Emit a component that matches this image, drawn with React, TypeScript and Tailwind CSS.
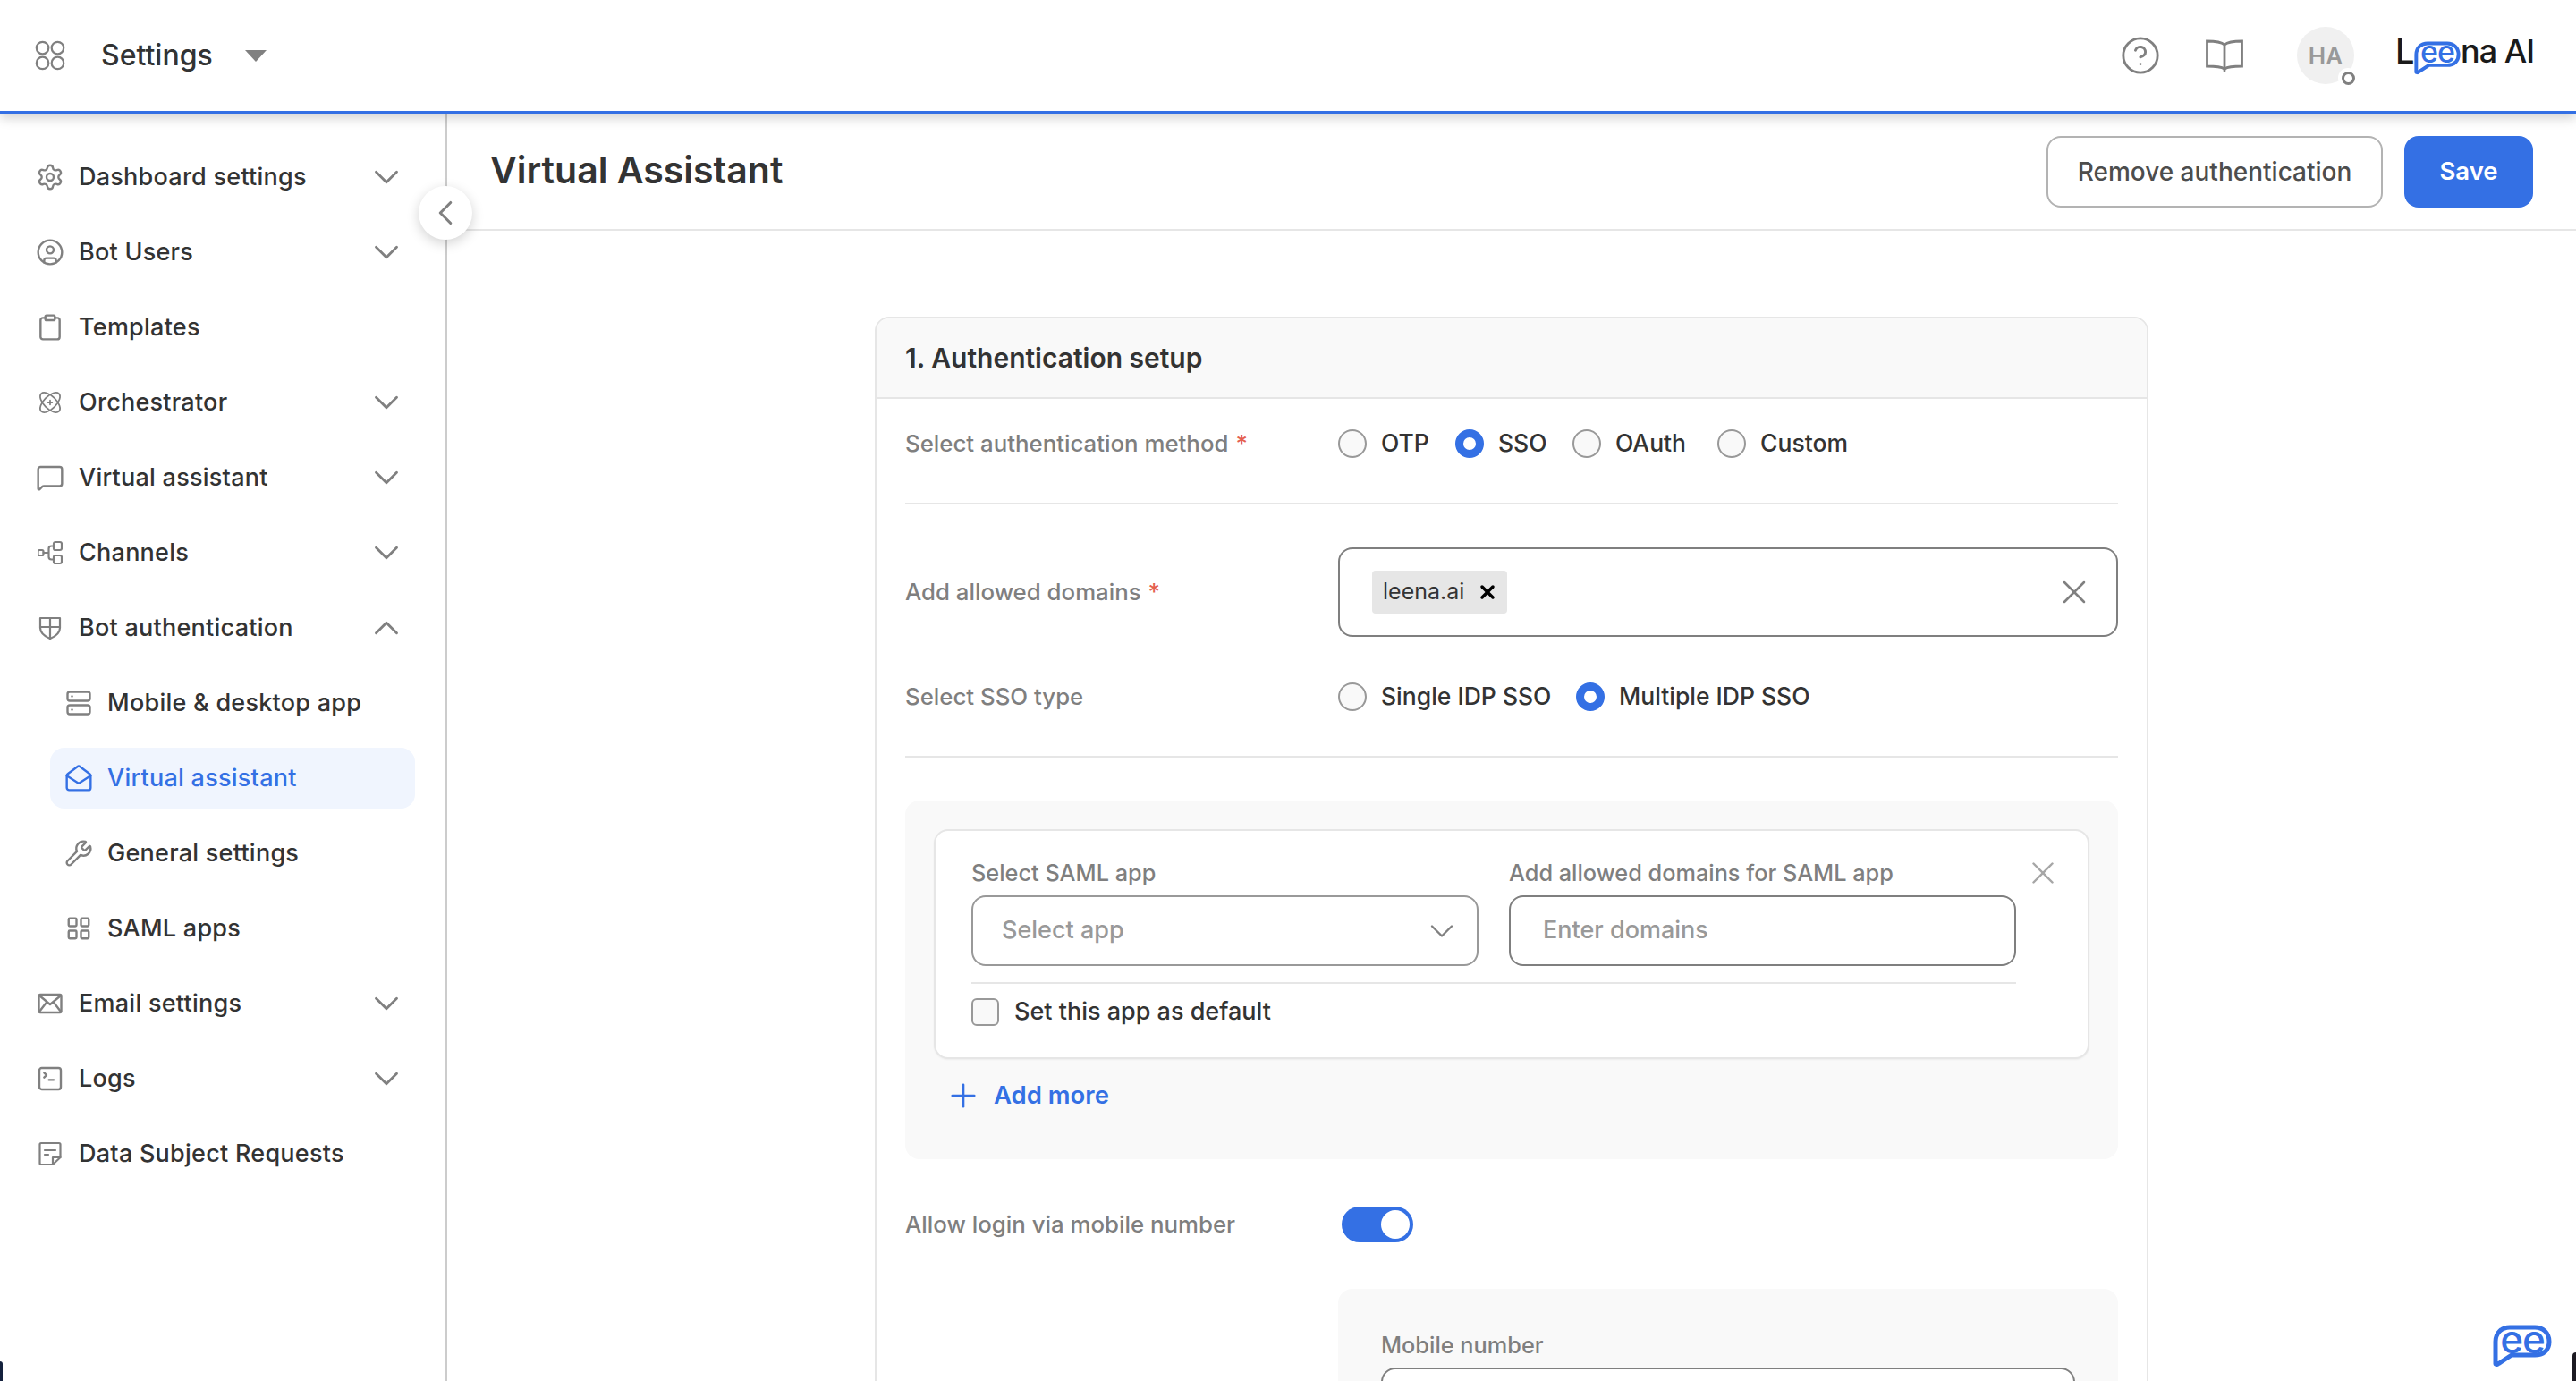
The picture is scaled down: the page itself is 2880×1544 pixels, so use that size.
import { ChevronDown, ChevronLeft, ChevronUp, CircleHelp, CircleUser, Clipboard, LayoutGrid, MailOpen, MessageSquare, Plus, Server, Settings, SquareTerminal, Wrench, X } from "lucide-react";
import type { ReactNode } from "react";

const stroke = { fill: "none", stroke: "currentColor", strokeWidth: 2, strokeLinecap: "round", strokeLinejoin: "round" } as const;

function AtomIcon() {
    return (
        <svg viewBox="0 0 24 24" className="w-[28px] h-[28px]" {...stroke} strokeWidth={1.5}>
            <ellipse cx="12" cy="12" rx="12" ry="6" transform="rotate(45 12 12)" />
            <ellipse cx="12" cy="12" rx="12" ry="6" transform="rotate(-45 12 12)" />
            <path d="M12 10v4M10 12h4" />
        </svg>
    );
}

function ChannelsIcon() {
    return (
        <svg viewBox="0 0 28 28" className="w-[28px] h-[28px]" {...stroke} strokeWidth={2.2}>
            <rect x="0.5" y="11" width="6" height="6" rx="1.5" />
            <rect x="18" y="2" width="9" height="9" rx="2" />
            <rect x="18" y="17" width="9" height="9" rx="2" />
            <path d="M6.5 14H12.5M18 6.5h-2.5a3 3 0 0 0-3 3v9a3 3 0 0 0 3 3H18" />
        </svg>
    );
}

function ShieldIcon() {
    return (
        <svg viewBox="0 0 28 28" className="w-[28px] h-[28px]" {...stroke} strokeWidth={2.2}>
            <path d="M3 3h22v11c0 6-5 9.500-11 12-6-2.500-11-6-11-12z" />
            <path d="M14 3v23M3 13h22" />
        </svg>
    );
}

function EmailIcon() {
    return (
        <svg viewBox="0 0 28 28" className="w-[28px] h-[28px]" {...stroke} strokeWidth={2.400}>
            <rect x="1.500" y="4" width="25" height="20" rx="1.500" />
            <path d="M2 5l12 10L26 5M2 23l8.500-11M26 23l-8.500-11" />
        </svg>
    );
}

function NoteIcon() {
    return (
        <svg viewBox="0 0 28 28" className="w-[28px] h-[28px]" {...stroke} strokeWidth={2.200}>
            <path d="M17 26H4a1.500 1.500 0 0 1-1.500-1.500v-21A1.500 1.500 0 0 1 4 2h20a1.500 1.500 0 0 1 1.500 1.500V18z" />
            <path d="M17 26v-8h8.500M8 10h12M8 15h4" />
        </svg>
    );
}

function AppsIcon() {
    return (
        <svg viewBox="0 0 32 32" className="w-[36px] h-[36px]" {...stroke}>
            <circle cx="8.500" cy="8.500" r="6" />
            <circle cx="23.500" cy="8.500" r="6" />
            <circle cx="8.500" cy="23.500" r="6" />
            <circle cx="23.500" cy="23.500" r="6" />
        </svg>
    );
}

function BookIcon() {
    return (
        <svg viewBox="0 0 42 36" className="w-[42px] h-[36px] text-[#808080]" {...stroke} strokeWidth={2.800}>
            <path d="M21 6C17 2.500 10 2 1.500 2v28c8 0 15 0 19.500 3 4.500-3 11.500-3 19.500-3V2C32 2 25 2.500 21 6z" strokeLinejoin="miter" />
            <path d="M21 6v29" />
        </svg>
    );
}

// speech bubble of the logo and the launcher, the two e's stay real text on top
function BubbleShape({ className, strokeWidth = 5 }: { className: string; strokeWidth?: number }) {
    return (
        <svg viewBox="0 0 66 48" className={className}>
            <path
                d="M3 44V19C3 9 10 3 19 3h28c9 0 16 6 16 16s-7 15-16 15H21L5 44.500z"
                fill="#fff"
                stroke="#3470e4"
                strokeWidth={strokeWidth}
                strokeLinejoin="round"
            />
        </svg>
    );
}

interface NavItem {
    label: string;
    icon: ReactNode;
    chevron?: "down" | "up";
    sub?: boolean;
    active?: boolean;
}

const navIconClass = "w-[32px] h-[32px]";

const navItems: NavItem[] = [
    { label: "Dashboard settings", icon: <Settings className={navIconClass} strokeWidth={1.8} />, chevron: "down" },
    { label: "Bot Users", icon: <CircleUser className={navIconClass} strokeWidth={1.8} />, chevron: "down" },
    { label: "Templates", icon: <Clipboard className={navIconClass} strokeWidth={1.8} /> },
    { label: "Orchestrator", icon: <AtomIcon />, chevron: "down" },
    { label: "Virtual assistant", icon: <MessageSquare className={navIconClass} strokeWidth={1.8} />, chevron: "down" },
    { label: "Channels", icon: <ChannelsIcon />, chevron: "down" },
    { label: "Bot authentication", icon: <ShieldIcon />, chevron: "up" },
    { label: "Mobile & desktop app", icon: <Server className="w-[30px] h-[30px]" strokeWidth={1.9} />, sub: true },
    { label: "Virtual assistant", icon: <MailOpen className={navIconClass} strokeWidth={1.8} />, sub: true, active: true },
    { label: "General settings", icon: <Wrench className={navIconClass} strokeWidth={1.8} />, sub: true },
    { label: "SAML apps", icon: <LayoutGrid className="w-[30px] h-[30px]" strokeWidth={1.9} />, sub: true },
    { label: "Email settings", icon: <EmailIcon />, chevron: "down" },
    { label: "Logs", icon: <SquareTerminal className={navIconClass} strokeWidth={1.8} />, chevron: "down" },
    { label: "Data Subject Requests", icon: <NoteIcon /> },
];

function SideItem({ item }: { item: NavItem }) {
    return (
        <div className="h-[84px] flex items-center pl-[40px] pr-[50px]">
            <div
                className={`flex items-center flex-1 h-[68px] rounded-[16px] ${item.sub ? "-ml-[16px] pl-[16px] -mr-[16px]" : ""} ${item.active ? "bg-[#f0f5fe] text-[#3470e4]" : ""}`}
            >
                <span className={`flex items-center justify-center w-[32px] shrink-0 ${item.active ? "text-[#3470e4]" : "text-[#808080]"}`}>
                    {item.icon}
                </span>
                <span className={`ml-[16px] text-[27px] tracking-[0.25px] font-medium whitespace-nowrap ${item.active ? "text-[#3470e4]" : "text-[#333333]"}`}>
                    {item.label}
                </span>
                {item.chevron === "down" && <ChevronDown className="ml-auto -mr-[7px] w-[46px] h-[46px] text-[#808080]" strokeWidth={1.5} />}
                {item.chevron === "up" && <ChevronUp className="ml-auto -mr-[7px] w-[46px] h-[46px] text-[#808080]" strokeWidth={1.5} />}
            </div>
        </div>
    );
}

function Radio({ label, checked, width }: { label: string; checked?: boolean; width: string }) {
    return (
        <div className={`flex items-center gap-[16px] ${width}`}>
            {checked ? (
                <span className="w-[32px] h-[32px] rounded-full bg-white border-[9px] border-[#3470e4] shrink-0" />
            ) : (
                <span className="w-[32px] h-[32px] rounded-full bg-[#f9f9f9] border-2 border-[#999999] shrink-0" />
            )}
            <span className="text-[26.5px] font-medium text-[#333333] whitespace-nowrap">{label}</span>
        </div>
    );
}

function FieldLabel({ children, required }: { children: string; required?: boolean }) {
    return (
        <div className="w-[484px] shrink-0 text-[25.800px] font-medium text-[#7f7f7f] whitespace-nowrap">
            {children}
            {required && <span className="text-[#e5604d] ml-[8px]">*</span>}
        </div>
    );
}

export default function App() {
    return (
        <div className="relative w-[2880px] h-[1544px] overflow-hidden bg-white flex flex-col [font-family:Inter,sans-serif]">
            {/* Top bar */}
            <header className="relative z-10 h-[128px] shrink-0 bg-white border-b-4 border-[#3470e4] shadow-[0_4px_12px_rgba(0,0,0,0.18)] flex items-center pl-[38px] pr-[48px]">
                <span className="text-[#808080]">
                    <AppsIcon />
                </span>
                <span className="ml-[39px] text-[32px] font-medium text-[#333333]">Settings</span>
                <span className="ml-[36px] w-0 h-0 border-l-[12px] border-r-[12px] border-t-[13px] border-l-transparent border-r-transparent border-t-[#808080]" />
                <div className="ml-auto flex items-center">
                    <CircleHelp className="w-[46px] h-[46px] text-[#808080]" strokeWidth={1.500} />
                    <span className="ml-[50px]">
                        <BookIcon />
                    </span>
                    <div className="relative ml-[60px] w-[64px] h-[64px] rounded-full bg-[#f0f0f0] flex items-center justify-center text-[26px] font-semibold text-[#999999]">
                        HA
                        <span className="absolute right-[-4px] bottom-[-4px] w-[22px] h-[22px] rounded-full bg-white flex items-center justify-center">
                            <span className="w-[15px] h-[15px] rounded-full border-[3px] border-[#808080]" />
                        </span>
                    </div>
                    <div className="relative ml-[48px] w-[152px] h-[64px]">
                        <span className="absolute left-[-2px] top-[3px] text-[38px] leading-[48px] font-medium text-[#1a1a1a]">L</span>
                        <span className="absolute left-[71px] top-[3px] text-[36px] leading-[48px] font-medium text-[#1a1a1a] tracking-[-1px] whitespace-nowrap">na AI</span>
                        <div className="absolute left-[19px] top-[16px] w-[52px] h-[38px]">
                            <BubbleShape className="w-[52px] h-[38px]" />
                            <span className="absolute left-0 right-0 top-[-5px] text-center text-[34px] leading-[34px] font-medium tracking-[-1px] text-[#3470e4]">ee</span>
                        </div>
                    </div>
                </div>
            </header>

            <div className="relative flex flex-1 min-h-0">
                {/* Sidebar */}
                <aside className="w-[500px] shrink-0 border-r-2 border-[#cccccc] pt-[28px]">
                    {navItems.map((item, i) => (
                        <div key={i} className={item.sub ? "pl-[32px]" : ""}>
                            <SideItem item={item} />
                        </div>
                    ))}
                </aside>

                {/* Collapse button, sits over the sidebar edge */}
                <button className="absolute left-[468px] top-[80px] z-10 w-[60px] h-[60px] rounded-full bg-white shadow-[0_4px_14px_rgba(0,0,0,0.18)] flex items-center justify-center text-[#808080]">
                    <ChevronLeft className="w-[46px] h-[46px]" strokeWidth={1.6} />
                </button>

                <main className="flex-1 min-w-0 flex flex-col">
                    <div className="h-[130px] shrink-0 border-b-2 border-[#e6e6e6] flex items-center pl-[48px] pr-[48px]">
                        <h1 className="text-[41px] font-semibold text-[#333333] mb-[2px]">Virtual Assistant</h1>
                        <button className="ml-auto w-[376px] h-[80px] rounded-[16px] border-2 border-[#b3b3b3] text-[28px] font-medium text-[#4d4d4d]">
                            Remove authentication
                        </button>
                        <button className="ml-[24px] w-[144px] h-[80px] rounded-[16px] bg-[#3470e4] text-[27.500px] font-semibold text-white">Save</button>
                    </div>

                    {/* Form card, runs off the bottom of the window */}
                    <div className="w-[1424px] ml-[478px] mt-[96px] shrink-0 rounded-t-[16px] border-2 border-[#e6e6e6] pb-[40px]">
                        <div className="h-[90px] bg-[#f9f9f9] rounded-t-[14px] border-b-2 border-[#e6e6e6] flex items-center px-[32px]">
                            <h2 className="text-[30px] font-semibold text-[#333333]">1. Authentication setup</h2>
                        </div>
                        <div className="px-[32px] pt-[34px]">
                            <div className="flex items-center h-[32px]">
                                <FieldLabel required>Select authentication method</FieldLabel>
                                <Radio label="OTP" width="w-[131px]" />
                                <Radio label="SSO" checked width="w-[131px]" />
                                <Radio label="OAuth" width="w-[162px]" />
                                <Radio label="Custom" width="w-[160px]" />
                            </div>
                            <div className="h-[2px] bg-[#e6e6e6] mt-[50px]" />

                            <div className="flex items-center mt-[48px]">
                                <FieldLabel required>Add allowed domains</FieldLabel>
                                <div className="flex-1 h-[100px] rounded-[16px] border-2 border-[#7f7f7f] flex items-center pl-[36px] pr-[25px]">
                                    <div className="h-[48px] w-[151px] bg-[#e6e6e6] rounded-[4px] flex items-center pl-[12px]">
                                        <span className="text-[25px] font-normal text-[#333333]">leena.ai</span>
                                        <X className="ml-auto mr-[10px] w-[24px] h-[24px] text-black" strokeWidth={3.500} />
                                    </div>
                                    <X className="ml-auto w-[44px] h-[44px] text-[#808080]" strokeWidth={1.400} />
                                </div>
                            </div>

                            <div className="flex items-center h-[32px] mt-[51px]">
                                <FieldLabel>Select SSO type</FieldLabel>
                                <Radio label="Single IDP SSO" width="w-[266px]" />
                                <Radio label="Multiple IDP SSO" checked width="w-[300px]" />
                            </div>
                            <div className="h-[2px] bg-[#e6e6e6] mt-[50px]" />

                            {/* SAML apps */}
                            <div className="mt-[48px] h-[401px] rounded-[16px] bg-[#f9f9f9] p-[32px]">
                                <div className="h-[257px] rounded-[16px] bg-white border-2 border-[#e6e6e6] pl-[40px] pr-[29px] pt-[30px] shadow-[0_1px_2px_rgba(0,0,0,0.05)]">
                                    <div className="flex">
                                        <div className="w-[1168px] shrink-0">
                                            <div className="flex gap-[34px]">
                                                <div className="flex-1">
                                                    <div className="h-[34px] text-[25.300px] font-medium text-[#7f7f7f] whitespace-nowrap leading-[34px]">Select SAML app</div>
                                                    <div className="mt-[8px] h-[79px] rounded-[16px] border-2 border-[#999999] flex items-center pl-[32px] pr-[17px]">
                                                        <span className="text-[27px] text-[#999999] font-medium">Select app</span>
                                                        <ChevronDown className="ml-auto w-[44px] h-[44px] text-[#808080]" strokeWidth={1.300} />
                                                    </div>
                                                </div>
                                                <div className="flex-1">
                                                    <div className="h-[34px] text-[25.300px] font-medium text-[#7f7f7f] whitespace-nowrap leading-[34px]">Add allowed domains for SAML app</div>
                                                    <div className="mt-[8px] h-[79px] rounded-[16px] border-2 border-[#7f7f7f] flex items-center pl-[36px]">
                                                        <span className="text-[27px] text-[#999999] font-medium">Enter domains</span>
                                                    </div>
                                                </div>
                                            </div>
                                        </div>
                                        <X className="ml-auto -mt-[4px] w-[42px] h-[42px] text-[#a6a6a6]" strokeWidth={1.400} />
                                    </div>
                                    <div className="w-[1168px] h-[2px] bg-[#e6e6e6] mt-[18px]" />
                                    <div className="flex items-center mt-[11px]">
                                        <span className="w-[31px] h-[31px] rounded-[6px] border-2 border-[#999999] bg-[#f9f9f9]" />
                                        <span className="ml-[17px] text-[27px] font-medium text-[#333333]">Set this app as default</span>
                                    </div>
                                </div>
                                <div className="flex items-center mt-[20px] pl-[12px]">
                                    <Plus className="w-[42px] h-[42px] text-[#3470e4]" strokeWidth={1.500} />
                                    <span className="ml-[13px] text-[27.500px] font-semibold text-[#3470e4]">Add more</span>
                                </div>
                            </div>

                            <div className="flex items-center mt-[53px] h-[40px]">
                                <FieldLabel>Allow login via mobile number</FieldLabel>
                                <div className="ml-[4px] w-[80px] h-[40px] rounded-full bg-[#3470e4] flex items-center justify-end pr-[4px]">
                                    <span className="w-[32px] h-[32px] rounded-full bg-white" />
                                </div>
                            </div>

                            <div className="ml-[484px] mt-[52px] h-[200px] rounded-[16px] bg-[#f9f9f9] px-[48px] pt-[48px]">
                                <div className="h-[30px] leading-[30px] text-[25.300px] font-medium text-[#7f7f7f]">Mobile number</div>
                                <div className="mt-[10px] h-[80px] rounded-[16px] border-2 border-[#7f7f7f] bg-white" />
                            </div>
                        </div>
                    </div>
                </main>
            </div>

            {/* Floating chat launcher */}
            <div className="absolute right-[27px] bottom-[15px] z-20 w-[66px] h-[48px]">
                <BubbleShape className="w-[66px] h-[48px]" />
                <span className="absolute left-0 right-0 top-[-6px] text-center text-[44px] leading-[44px] font-medium tracking-[-1px] text-[#3470e4]">ee</span>
            </div>

            {/* Window corners caught by the screenshot */}
            <div className="absolute left-0 bottom-0 z-20 w-[3px] h-[22px] rounded-tr-full bg-[#14213d]" />
            <div className="absolute right-0 bottom-0 z-20 w-[4px] h-[32px] rounded-tl-full bg-[#1c1a22]" />
        </div>
    );
}
